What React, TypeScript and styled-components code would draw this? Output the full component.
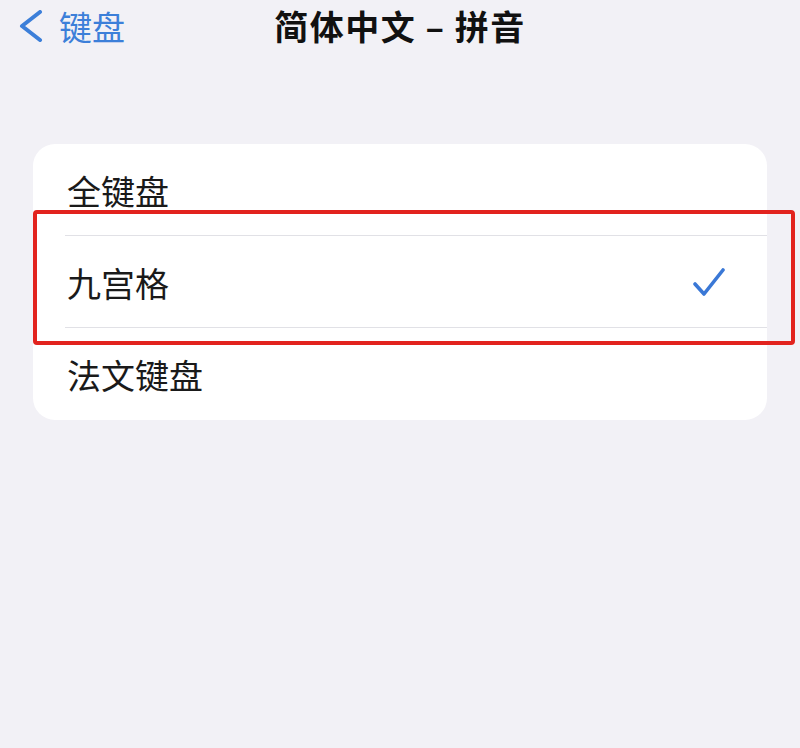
import React from "react";
import styled, { createGlobalStyle } from "styled-components";

const Global = createGlobalStyle`
  html, body {
    margin: 0;
    padding: 0;
    background: #f2f1f6;
    font-family: "Noto Sans CJK SC", "Noto Sans", sans-serif;
  }
`;

const Page = styled.div`
  width: 800px;
  height: 748px;
  background: #f2f1f6;
  overflow: hidden;
`;

const NavBar = styled.div`
  height: 52px;
  display: grid;
  grid-template-columns: 1fr auto 1fr;
  align-items: center;
`;

const Back = styled.div`
  display: flex;
  align-items: center;
  gap: 15px;
  padding-left: 18px;
  color: #3c7fd9;
  font-size: 33px;
  line-height: 1;
`;

const Title = styled.div`
  font-size: 34px;
  font-weight: 700;
  color: #111;
  line-height: 1;
  letter-spacing: 1.5px;
`;

const CardWrap = styled.div`
  position: relative;
  margin: 92px 0 0 33px;
  width: 734px;
`;

const Card = styled.div`
  background: #ffffff;
  border-radius: 22px;
`;

const Row = styled.div<{ $divider?: boolean }>`
  height: 92px;
  display: flex;
  align-items: center;
  justify-content: space-between;
  padding: 0 42px 0 34px;
  position: relative;
  font-size: 34px;
  color: #1a1a1a;
  box-sizing: border-box;
  ${(p) =>
    p.$divider
      ? `&::after {
    content: "";
    position: absolute;
    left: 32px;
    right: 0;
    bottom: 0;
    height: 1.5px;
    background: #e1e1e6;
  }`
      : ""}
`;

const Highlight = styled.div`
  position: absolute;
  top: 66px;
  left: 0;
  right: -28px;
  height: 135px;
  border: 4px solid #e2231e;
  border-radius: 4px;
  box-sizing: border-box;
  pointer-events: none;
`;

const Check = () => (
  <svg width="32" height="32" viewBox="0 0 32 32" fill="none">
    <path
      d="M2 18 L11 28 L30 4"
      stroke="#3a78d6"
      strokeWidth="3.6"
      strokeLinecap="round"
      strokeLinejoin="round"
    />
  </svg>
);

const Chevron = () => (
  <svg width="26" height="32" viewBox="0 0 26 32" fill="none">
    <path
      d="M22 2 L4 16 L22 30"
      stroke="#3c7fd9"
      strokeWidth="4"
      strokeLinecap="round"
      strokeLinejoin="round"
    />
  </svg>
);

export default function App() {
  return (
    <>
      <Global />
      <Page>
        <NavBar>
          <Back>
            <Chevron />
            <span>键盘</span>
          </Back>
          <Title>简体中文 – 拼音</Title>
          <div />
        </NavBar>
        <CardWrap>
          <Card>
            <Row $divider>全键盘</Row>
            <Row $divider>
              <span>九宫格</span>
              <Check />
            </Row>
            <Row>法文键盘</Row>
          </Card>
          <Highlight />
        </CardWrap>
      </Page>
    </>
  );
}
